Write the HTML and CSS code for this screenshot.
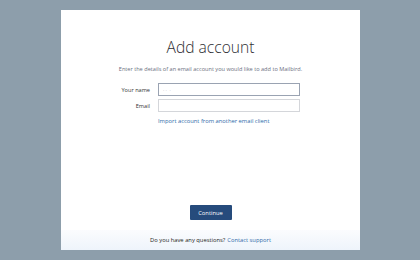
FILE: index.html
```html
<!DOCTYPE html>
<html>
<head>
<meta charset="utf-8">
<link rel="stylesheet" href="styles.css">
</head>
<body>
<div class="dialog">
  <div class="main">
    <h1 class="title">Add account</h1>
    <p class="subtitle">Enter the details of an email account you would like to add to Mailbird.</p>
    <div class="form">
      <div class="row">
        <label class="label">Your name</label>
        <div class="input focused"><span class="ph">·&nbsp;·&nbsp;&nbsp;·</span></div>
      </div>
      <div class="row">
        <label class="label">Email</label>
        <div class="input"></div>
      </div>
      <div class="row">
        <span class="label"></span>
        <a class="link import">Import account from another email client</a>
      </div>
    </div>
    <div class="spacer"></div>
    <button class="btn">Continue</button>
  </div>
  <div class="footer">Do you have any questions? <a class="link">Contact support</a></div>
</div>
</body>
</html>
```
FILE: styles.css
```css
html, body { margin: 0; padding: 0; }
body {
  background: #8d9eab;
  font-family: "Open Sans", "Noto Sans", sans-serif;
  width: 420px;
  height: 260px;
  overflow: hidden;
  padding-top: 10px;
  box-sizing: border-box;
}
.dialog {
  width: 299px;
  height: 240px;
  margin-left: 61px;
  background: #ffffff;
  display: flex;
  flex-direction: column;
}
.main {
  flex: 1;
  display: flex;
  flex-direction: column;
  align-items: center;
  padding-top: 28px;
}
.title {
  margin: 0;
  font-weight: 300;
  font-size: 15.6px;
  line-height: 19px;
  color: #2e2e33;
}
.subtitle {
  margin: 8px 0 0;
  font-size: 5.6px;
  line-height: 8px;
  color: #6a6f80;
}
.form {
  margin-top: 10px;
  display: flex;
  flex-direction: column;
  gap: 3px;
  width: 100%;
}
.row {
  display: flex;
  align-items: center;
}
.label {
  width: 97px;
  text-align: right;
  padding-right: 8px;
  box-sizing: border-box;
  font-size: 5.6px;
  color: #333;
}
.input {
  width: 142px;
  height: 13px;
  box-sizing: border-box;
  border: 1px solid #d4d6da;
  display: flex;
  align-items: center;
  padding-left: 4px;
}
.input.focused { border-color: #9aa3b2; }
.ph { font-size: 5px; color: #a9aeb7; }
.link {
  color: #2d6aa8;
  font-size: 5.8px;
}
.import { margin-top: 2px; }
.spacer { flex: 1; }
.btn {
  width: 42px;
  height: 15px;
  border: 0;
  border-radius: 1px;
  background: #264b7c;
  color: #fff;
  font-family: inherit;
  font-size: 5.8px;
  padding: 0;
  margin-bottom: 10px;
}
.footer {
  height: 20px;
  background: linear-gradient(#fbfcfe, #eef4fb);
  display: flex;
  align-items: center;
  justify-content: center;
  font-size: 5.8px;
  color: #1e1e22;
  gap: 2px;
}
```
